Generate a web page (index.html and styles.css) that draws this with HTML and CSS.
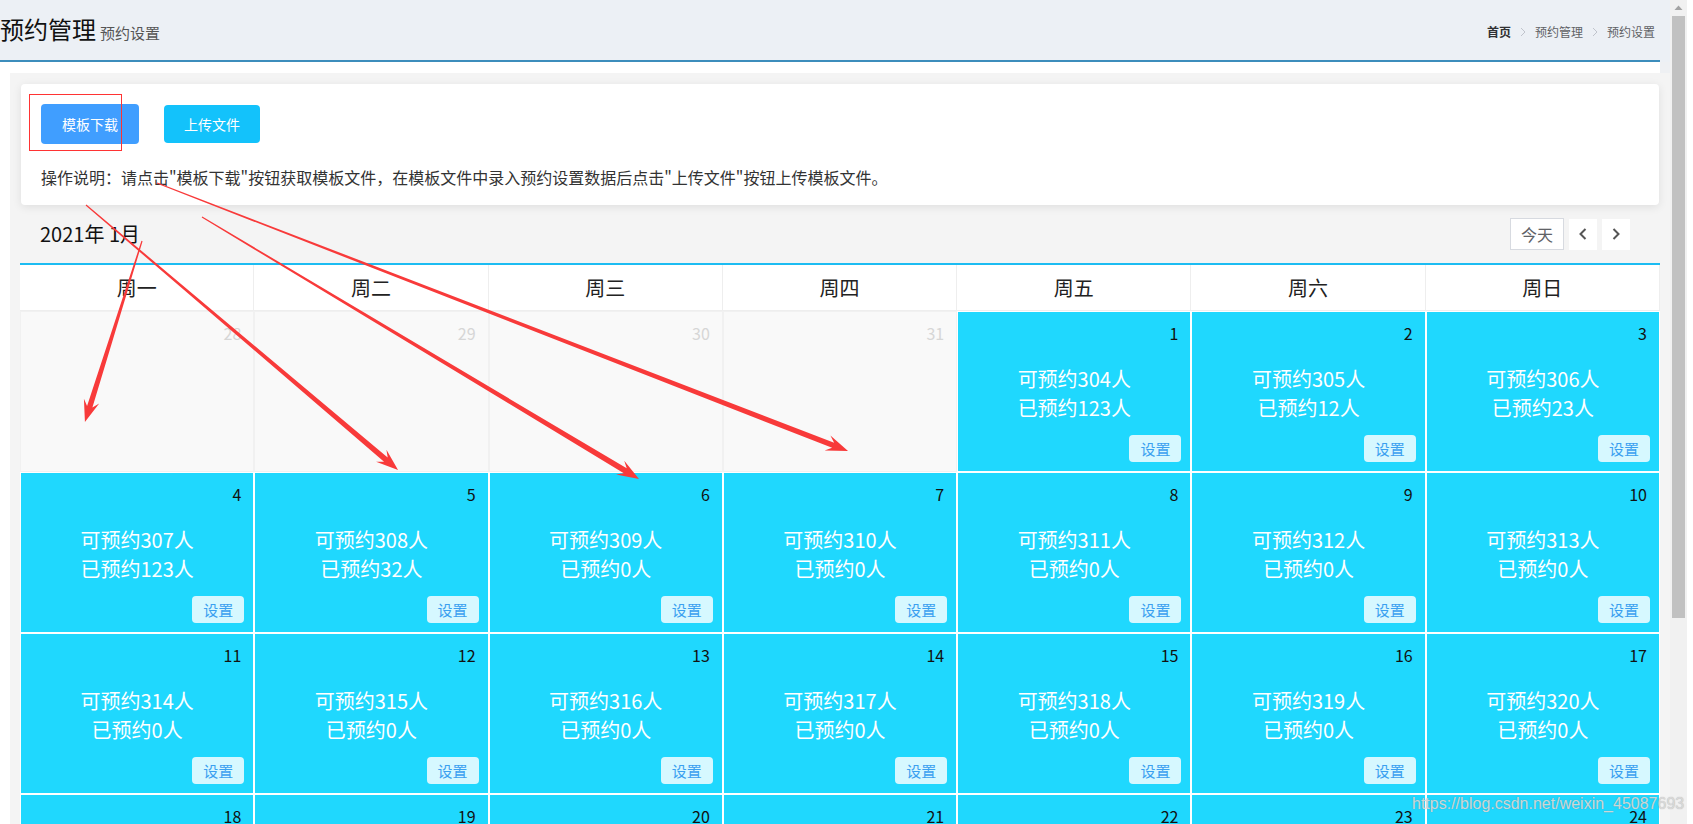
FILE: index.html
```html
<!DOCTYPE html>
<html lang="zh-CN">
<head>
<meta charset="utf-8">
<title>预约设置</title>
<link rel="stylesheet" href="styles.css">
</head>
<body>
<div class="page">
  <div class="main">
    <div class="content-header">
      <h1 class="page-title">预约管理<small>预约设置</small></h1>
      <div class="breadcrumb">
        <span class="crumb first">首页</span>
        <svg class="sep" width="6" height="10" viewBox="0 0 6 10"><polyline points="1,1 5,5 1,9" fill="none" stroke="#c0c4cc" stroke-width="1"/></svg>
        <span class="crumb">预约管理</span>
        <svg class="sep" width="6" height="10" viewBox="0 0 6 10"><polyline points="1,1 5,5 1,9" fill="none" stroke="#c0c4cc" stroke-width="1"/></svg>
        <span class="crumb">预约设置</span>
      </div>
    </div>
    <div class="rule-row"><div class="rule"></div></div>
    <div class="spacer-row"><div class="spacer"></div></div>
    <div class="box">
      <div class="card">
        <div class="btn-row">
          <button class="btn btn-primary">模板下载</button>
          <button class="btn btn-upload">上传文件</button>
        </div>
        <p class="tip">操作说明：请点击"模板下载"按钮获取模板文件，在模板文件中录入预约设置数据后点击"上传文件"按钮上传模板文件。</p>
      </div>
      <div class="cal-toolbar">
        <div class="cal-title">2021年 1月</div>
        <div class="cal-btns">
          <button class="today">今天</button>
          <button class="nav"><svg width="8" height="12" viewBox="0 0 8 12"><polyline points="6.5,1 1.5,6 6.5,11" fill="none" stroke="#555" stroke-width="2"/></svg></button>
          <button class="nav"><svg width="8" height="12" viewBox="0 0 8 12"><polyline points="1.5,1 6.5,6 1.5,11" fill="none" stroke="#555" stroke-width="2"/></svg></button>
        </div>
      </div>
      <div class="calendar">
        <div class="cal-head">
          <div class="hcell">周一</div><div class="hcell">周二</div><div class="hcell">周三</div><div class="hcell">周四</div><div class="hcell">周五</div><div class="hcell">周六</div><div class="hcell">周日</div>
        </div>
        <div class="cal-body">
          <div class="cell off"><div class="num">28</div></div>
          <div class="cell off"><div class="num">29</div></div>
          <div class="cell off"><div class="num">30</div></div>
          <div class="cell off"><div class="num">31</div></div>
          <div class="cell on"><div class="num">1</div><div class="info"><p>可预约304人</p><p>已预约123人</p></div><button class="set">设置</button></div>
          <div class="cell on"><div class="num">2</div><div class="info"><p>可预约305人</p><p>已预约12人</p></div><button class="set">设置</button></div>
          <div class="cell on"><div class="num">3</div><div class="info"><p>可预约306人</p><p>已预约23人</p></div><button class="set">设置</button></div>

          <div class="cell on"><div class="num">4</div><div class="info"><p>可预约307人</p><p>已预约123人</p></div><button class="set">设置</button></div>
          <div class="cell on"><div class="num">5</div><div class="info"><p>可预约308人</p><p>已预约32人</p></div><button class="set">设置</button></div>
          <div class="cell on"><div class="num">6</div><div class="info"><p>可预约309人</p><p>已预约0人</p></div><button class="set">设置</button></div>
          <div class="cell on"><div class="num">7</div><div class="info"><p>可预约310人</p><p>已预约0人</p></div><button class="set">设置</button></div>
          <div class="cell on"><div class="num">8</div><div class="info"><p>可预约311人</p><p>已预约0人</p></div><button class="set">设置</button></div>
          <div class="cell on"><div class="num">9</div><div class="info"><p>可预约312人</p><p>已预约0人</p></div><button class="set">设置</button></div>
          <div class="cell on"><div class="num">10</div><div class="info"><p>可预约313人</p><p>已预约0人</p></div><button class="set">设置</button></div>

          <div class="cell on"><div class="num">11</div><div class="info"><p>可预约314人</p><p>已预约0人</p></div><button class="set">设置</button></div>
          <div class="cell on"><div class="num">12</div><div class="info"><p>可预约315人</p><p>已预约0人</p></div><button class="set">设置</button></div>
          <div class="cell on"><div class="num">13</div><div class="info"><p>可预约316人</p><p>已预约0人</p></div><button class="set">设置</button></div>
          <div class="cell on"><div class="num">14</div><div class="info"><p>可预约317人</p><p>已预约0人</p></div><button class="set">设置</button></div>
          <div class="cell on"><div class="num">15</div><div class="info"><p>可预约318人</p><p>已预约0人</p></div><button class="set">设置</button></div>
          <div class="cell on"><div class="num">16</div><div class="info"><p>可预约319人</p><p>已预约0人</p></div><button class="set">设置</button></div>
          <div class="cell on"><div class="num">17</div><div class="info"><p>可预约320人</p><p>已预约0人</p></div><button class="set">设置</button></div>

          <div class="cell on short"><div class="num">18</div></div>
          <div class="cell on short"><div class="num">19</div></div>
          <div class="cell on short"><div class="num">20</div></div>
          <div class="cell on short"><div class="num">21</div></div>
          <div class="cell on short"><div class="num">22</div></div>
          <div class="cell on short"><div class="num">23</div></div>
          <div class="cell on short"><div class="num">24</div></div>
        </div>
      </div>
    </div>
  </div>
  <div class="scrollbar">
    <svg class="sb-arrow" width="17" height="16" viewBox="0 0 17 16"><polygon points="4.5,10 12.5,10 8.5,5.5" fill="#a3a3a3"/></svg>
    <div class="sb-thumb"></div>
  </div>
</div>

<svg class="annot" width="1693" height="824" viewBox="0 0 1693 824">
  <rect x="29.5" y="94.5" width="92" height="56" fill="none" stroke="#f33" stroke-width="1"/>
  <g fill="#f83a3a">
    <polygon transform="translate(142 241) rotate(107.5)" points="0,-0.6 173.8,-2.8 167.8,-8 189.8,0 167.8,8 173.8,2.8 0,0.6"/>
    <polygon transform="translate(86 205) rotate(40.34)" points="0,-0.6 393.4,-2.8 387.4,-8 409.4,0 387.4,8 393.4,2.8 0,0.6"/>
    <polygon transform="translate(202 217) rotate(30.94)" points="0,-0.6 493.5,-2.8 487.5,-8 509.5,0 487.5,8 493.5,2.8 0,0.6"/>
    <polygon transform="translate(157 183) rotate(21.2)" points="0,-0.6 725.2,-2.8 719.2,-8 741.2,0 719.2,8 725.2,2.8 0,0.6"/>
  </g>
</svg>
<div class="watermark">https://blog.csdn.net/weixin_45087693</div>
</body>
</html>
```

FILE: styles.css
```css
html, body {
  margin: 0;
  padding: 0;
}
body {
  width: 1693px;
  height: 824px;
  overflow: hidden;
  background: #fff;
  font-family: "Noto Sans CJK SC", "Noto Sans", sans-serif;
  color: #333;
  position: relative;
}
button {
  font-family: inherit;
  cursor: pointer;
}
.page {
  display: flex;
  align-items: flex-start;
  height: 824px;
  overflow: hidden;
}
.main {
  width: 1670px;
  flex: none;
  height: 824px;
  overflow: hidden;
}
.content-header {
  height: 60px;
  background: #ecf0f5;
  display: flex;
  align-items: center;
  justify-content: space-between;
  padding-right: 15px;
  box-sizing: border-box;
}
.page-title {
  margin: 0;
  font-size: 24px;
  font-weight: normal;
  line-height: 30px;
  color: #111;
  padding-top: 2px;
}
.page-title small {
  font-size: 15px;
  color: #555;
  margin-left: 4px;
}
.breadcrumb {
  display: flex;
  align-items: center;
  gap: 9px;
  font-size: 12px;
  line-height: 16px;
  padding-top: 3px;
}
.crumb {
  color: #606266;
}
.crumb.first {
  color: #303133;
  font-weight: bold;
}
.sep {
  display: block;
}
.rule-row {
  background: #ecf0f5;
  height: 2px;
}
.rule {
  width: 1660px;
  height: 2px;
  background: #3c8dbc;
}
.spacer-row {
  background: #eef0f3;
  height: 11px;
}
.spacer {
  width: 1660px;
  height: 11px;
  background: #fff;
}
.box {
  margin-left: 10px;
  height: 751px;
  background: #f4f4f4;
  padding: 11px 10px 0;
  box-sizing: border-box;
}
.card {
  margin: 0 1px;
  height: 121px;
  box-sizing: border-box;
  background: #fff;
  border-radius: 4px;
  box-shadow: 0 2px 10px rgba(0, 0, 0, 0.09);
  padding: 20px;
}
.btn-row {
  display: flex;
  align-items: center;
  gap: 25px;
}
.btn {
  border: 0;
  border-radius: 4px;
  color: #fff;
  font-size: 14px;
  padding: 0;
}
.btn-primary {
  width: 98px;
  height: 40px;
  background: #409eff;
}
.btn-upload {
  width: 96px;
  height: 38px;
  background: #13c2fb;
}
.tip {
  margin: 22px 0 0;
  font-size: 16px;
  line-height: 22px;
  color: #333;
}
.cal-toolbar {
  height: 58px;
  display: flex;
  align-items: center;
  justify-content: space-between;
  padding: 0 30px 0 20px;
}
.cal-title {
  font-size: 20px;
  line-height: 26px;
  color: #111;
}
.cal-btns {
  display: flex;
  align-items: center;
  gap: 5px;
}
.today {
  width: 54px;
  height: 32px;
  box-sizing: border-box;
  border: 1px solid #d7dae0;
  background: #fff;
  color: #606266;
  font-size: 16px;
  padding: 0;
}
.nav {
  width: 28px;
  height: 31px;
  border: 0;
  background: #fff;
  padding: 0;
  display: flex;
  align-items: center;
  justify-content: center;
}
.calendar {
  width: 1640px;
  border-top: 2px solid #1cbcf2;
  background: #fff;
}
.cal-head {
  display: grid;
  grid-template-columns: repeat(7, 1fr);
  height: 46px;
}
.hcell {
  border-right: 1px solid #eee;
  border-bottom: 1px solid #eee;
  display: flex;
  align-items: center;
  justify-content: center;
  font-size: 20px;
  color: #222;
}
.cal-body {
  display: grid;
  grid-template-columns: repeat(7, 1fr);
  grid-auto-rows: 161px;
}
.cell {
  box-sizing: border-box;
  border: 1px solid #fff;
  display: flex;
  flex-direction: column;
  min-width: 0;
}
.cell.short {
  height: 40px;
  border-bottom: 0;
}
.cell.on {
  background: #1fd8fe;
}
.cell.off {
  background: #f9f9f9;
  border-color: #f1f1f1;
}
.num {
  text-align: right;
  padding: 10px 12px 0;
  font-size: 16px;
  line-height: 22px;
  color: #111;
}
.off .num {
  color: #d6d6d6;
}
.info {
  margin-top: 20px;
  text-align: center;
  color: #fff;
  font-size: 20px;
  line-height: 29px;
}
.info p {
  margin: 0;
}
.set {
  margin: auto 9px 9px auto;
  width: 52px;
  height: 27px;
  border: 0;
  border-radius: 4px;
  background: #d6f8ff;
  color: #3aa0f0;
  font-size: 15px;
  padding: 0;
}
.scrollbar {
  width: 17px;
  flex: none;
  height: 824px;
  background: #f1f1f1;
}
.sb-arrow {
  display: block;
}
.sb-thumb {
  margin: 0 2px;
  height: 602px;
  background: #c1c1c1;
}
.annot {
  position: absolute;
  left: 0;
  top: 0;
  pointer-events: none;
}
.watermark {
  position: absolute;
  left: 1412px;
  top: 793px;
  font-family: "Liberation Sans", Arial, sans-serif;
  font-size: 16px;
  line-height: 22px;
  color: rgba(222, 222, 222, 0.9);
  text-shadow: 0 0 1px rgba(110, 110, 110, 0.55);
  white-space: nowrap;
}
```
